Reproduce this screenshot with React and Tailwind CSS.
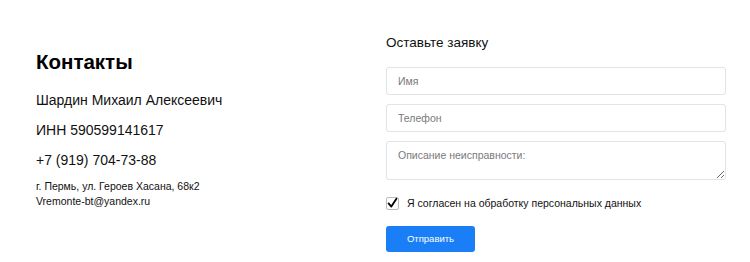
import React from 'react';

const App = () => {
  return (
    <div className="w-[750px] h-[262px] bg-white overflow-hidden [font-family:'Liberation_Sans',Arial,sans-serif] text-[#111]">
      <div className="flex pl-[36px] pt-[33px]">
        {/* Contacts */}
        <div className="w-[350px] pt-[17px]">
          <h2 className="text-[20.5px] font-bold leading-[24px] mb-[17px] text-black">Контакты</h2>
          <p className="text-[14px] leading-[18px] mb-[12px]">Шардин Михаил Алексеевич</p>
          <p className="text-[14px] leading-[18px] mb-[12px]">ИНН 590599141617</p>
          <p className="text-[14px] leading-[18px] mb-[10px]">+7 (919) 704-73-88</p>
          <p className="text-[10.5px] leading-[15px]">г. Пермь, ул. Героев Хасана, 68к2</p>
          <p className="text-[10.5px] leading-[15px]">Vremonte-bt@yandex.ru</p>
        </div>

        {/* Form */}
        <form className="w-[340px]">
          <h3 className="text-[13.5px] leading-[20px] mb-[14px]">Оставьте заявку</h3>
          <input
            type="text"
            placeholder="Имя"
            className="block w-full h-[28px] px-[11px] mb-[9px] text-[10.5px] border border-[#e3e3e3] rounded-[3px] placeholder:text-[#7a7a7a] outline-none"
          />
          <input
            type="text"
            placeholder="Телефон"
            className="block w-full h-[28px] px-[11px] mb-[9px] text-[10.5px] border border-[#e3e3e3] rounded-[3px] placeholder:text-[#7a7a7a] outline-none"
          />
          <textarea
            placeholder="Описание неисправности:"
            className="block w-full h-[39px] px-[11px] py-[6px] text-[10.5px] leading-[14px] border border-[#e3e3e3] rounded-[3px] placeholder:text-[#7a7a7a] outline-none"
          />
          <label className="flex items-center gap-[8px] mt-[16px] mb-[15px]">
            <span className="w-[13px] h-[13px] border border-[#bbb] rounded-[2px] flex items-center justify-center bg-white">
              <svg viewBox="0 0 14 14" className="w-[12px] h-[12px]">
                <path d="M2 7.5 L5.5 11.5 L12 1.5" fill="none" stroke="#000" strokeWidth="2.3" strokeLinecap="round" strokeLinejoin="round" />
              </svg>
            </span>
            <span className="text-[10.5px] leading-[14px]">Я согласен на обработку персональных данных</span>
          </label>
          <button type="button" className="w-[89px] h-[26px] bg-[#1a7ff6] text-white text-[9.5px] rounded-[3px]">
            Отправить
          </button>
        </form>
      </div>
    </div>
  );
};

export default App;
